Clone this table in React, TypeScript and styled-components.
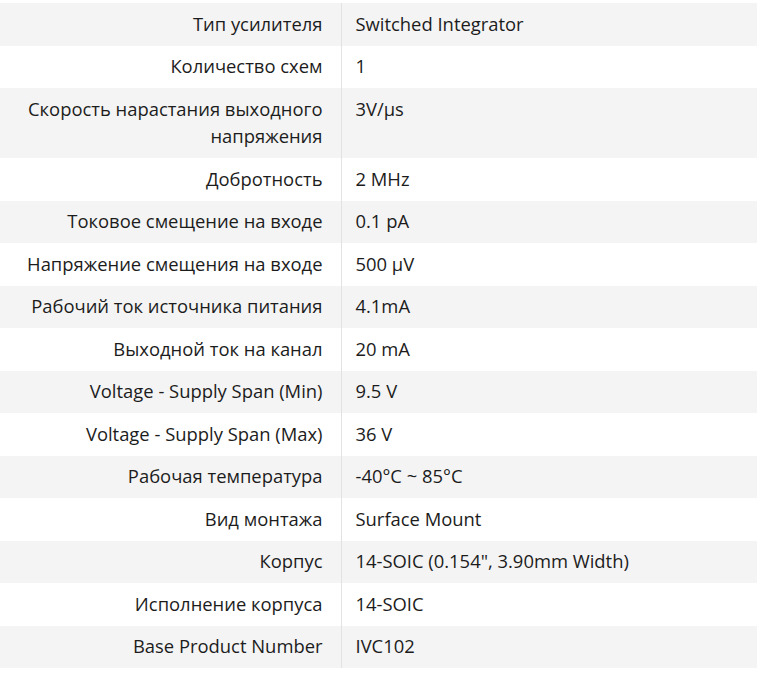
import React from 'react'
import styled, { createGlobalStyle } from 'styled-components'

const GlobalStyle = createGlobalStyle`
  html, body {
    margin: 0;
    padding: 0;
    background: #ffffff;
  }
  body {
    font-family: 'Open Sans', 'Noto Sans', sans-serif;
    color: #1c1c1c;
  }
`

type Spec = { name: string; value: string }

const specs: Spec[] = [
  { name: 'Тип усилителя', value: 'Switched Integrator' },
  { name: 'Количество схем', value: '1' },
  { name: 'Скорость нарастания выходного напряжения', value: '3V/µs' },
  { name: 'Добротность', value: '2 MHz' },
  { name: 'Токовое смещение на входе', value: '0.1 pA' },
  { name: 'Напряжение смещения на входе', value: '500 µV' },
  { name: 'Рабочий ток источника питания', value: '4.1mA' },
  { name: 'Выходной ток на канал', value: '20 mA' },
  { name: 'Voltage - Supply Span (Min)', value: '9.5 V' },
  { name: 'Voltage - Supply Span (Max)', value: '36 V' },
  { name: 'Рабочая температура', value: '-40°C ~ 85°C' },
  { name: 'Вид монтажа', value: 'Surface Mount' },
  { name: 'Корпус', value: '14-SOIC (0.154", 3.90mm Width)' },
  { name: 'Исполнение корпуса', value: '14-SOIC' },
  { name: 'Base Product Number', value: 'IVC102' },
]

const Wrapper = styled.div`
  padding-top: 3px;
`

const Table = styled.table`
  width: 100%;
  border-collapse: collapse;
  border-spacing: 0;
  font-size: 18.4px;
  line-height: 27.5px;
`

const Row = styled.tr<{ shaded: boolean }>`
  background-color: ${(props) => (props.shaded ? '#f4f4f4' : '#ffffff')};
`

const NameCell = styled.td`
  width: 341px;
  box-sizing: border-box;
  padding: 6.5px 18px 8.5px 14px;
  text-align: right;
  vertical-align: top;
  border-right: 1px solid #e2e2e2;
`

const ValueCell = styled.td`
  padding: 6.5px 15px 8.5px 14px;
  text-align: left;
  vertical-align: top;
`

export default function App() {
  return (
    <Wrapper>
      <GlobalStyle />
      <Table>
        <tbody>
          {specs.map((spec, i) => (
            <Row key={spec.name} shaded={i % 2 === 0}>
              <NameCell>{spec.name}</NameCell>
              <ValueCell>{spec.value}</ValueCell>
            </Row>
          ))}
        </tbody>
      </Table>
    </Wrapper>
  )
}
